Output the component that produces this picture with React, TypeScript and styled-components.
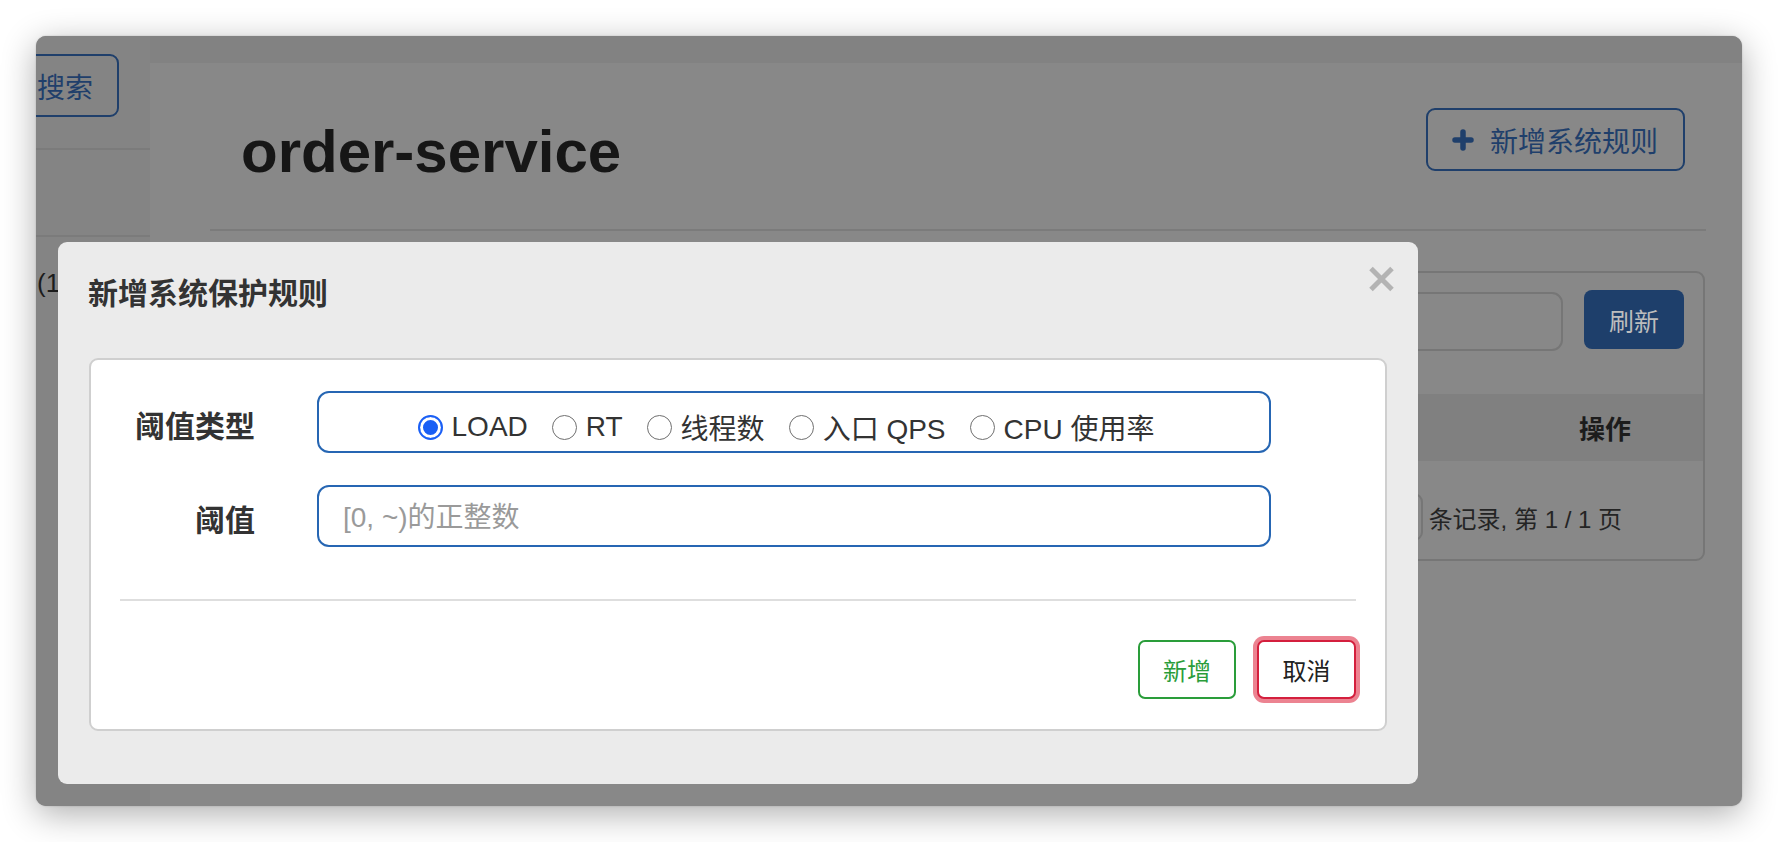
import styled, { createGlobalStyle } from 'styled-components';

const FONT = `"Liberation Sans", "Noto Sans CJK SC", sans-serif`;

const GlobalStyle = createGlobalStyle`
    html, body {
        margin: 0;
        padding: 0;
        background: #ffffff;
        font-family: ${FONT};
    }
    * {
        box-sizing: border-box;
    }
`

const Screen = styled.div`
    width: 1778px;
    height: 842px;
    padding: 36px;
`

const Window = styled.div`
    position: relative;
    display: flex;
    width: 1706px;
    height: 770px;
    border-radius: 10px;
    overflow: hidden;
    background-color: #888888;
    box-shadow: 0 8px 34px rgba(0, 0, 0, 0.32), 0 0 2px rgba(0, 0, 0, 0.2);
`

/* ---------- dimmed page behind the modal ---------- */

const Sidebar = styled.div`
    width: 114px;
    flex-shrink: 0;
    background-color: #848484;
    padding-top: 18px;
`

const SearchButton = styled.div`
    display: flex;
    align-items: center;
    justify-content: flex-end;
    margin-left: -60px;
    width: 143px;
    height: 63px;
    padding-right: 24px;
    border: 2px solid #1f3f6b;
    border-radius: 9px;
    color: #1f3f6b;
    font-size: 28px;
`

const SideLine = styled.div<{ $gap: number }>`
    height: 2px;
    margin-top: ${p => p.$gap}px;
    background-color: #7b7b7b;
`

const SideText = styled.div`
    margin-top: 31px;
    padding-left: 1px;
    font-size: 26px;
    line-height: 30px;
    color: #1c1c1c;
    white-space: nowrap;
`

const Main = styled.div`
    flex: 1;
    display: flex;
    flex-direction: column;
`

const TopBand = styled.div`
    height: 27px;
    background-color: #828282;
`

const Header = styled.div`
    display: flex;
    justify-content: space-between;
    align-items: flex-start;
    height: 166px;
    padding: 0 57px 0 91px;
`

const PageTitle = styled.h1`
    margin: 59px 0 0;
    font-size: 60px;
    line-height: 60px;
    font-weight: 700;
    color: #161616;
`

const OutlineButton = styled.div`
    display: flex;
    align-items: center;
    gap: 16px;
    margin-top: 45px;
    height: 63px;
    padding: 0 25px 0 24px;
    border: 2px solid #1f3f6b;
    border-radius: 9px;
    color: #1f3f6b;
    font-size: 28px;
`

const Rule = styled.div`
    height: 2px;
    margin: 0 36px 0 60px;
    background-color: #7b7b7b;
`

const Panel = styled.div`
    height: 290px;
    margin: 40px 37px 0 60px;
    border: 2px solid #767676;
    border-radius: 9px;
    display: flex;
    flex-direction: column;
`

const Toolbar = styled.div`
    display: flex;
    justify-content: flex-end;
    gap: 21px;
    padding: 17px 19px 0 0;
`

const SearchInput = styled.div`
    width: 640px;
    height: 59px;
    margin-top: 2px;
    border: 2px solid #767676;
    border-radius: 11px;
`

const RefreshButton = styled.div`
    display: flex;
    align-items: center;
    justify-content: center;
    width: 100px;
    height: 59px;
    border-radius: 8px;
    background-color: #1e3f6b;
    color: #bdbdbd;
    font-size: 25px;
`

const TableHead = styled.div`
    display: flex;
    align-items: center;
    justify-content: flex-end;
    height: 67px;
    margin-top: 43px;
    padding-right: 72px;
    background-color: #808080;
    color: #1c1c1c;
    font-size: 26px;
    font-weight: 700;
`

const Pager = styled.div`
    display: flex;
    align-items: center;
    justify-content: flex-end;
    gap: 6px;
    height: 60px;
    margin-top: 26px;
    padding-right: 81px;
    color: #242424;
    font-size: 24px;
`

const PageSize = styled.div`
    width: 70px;
    height: 48px;
    border: 2px solid #767676;
    border-radius: 9px;
`

/* ---------- modal ---------- */

const Modal = styled.div`
    position: absolute;
    left: 22px;
    top: 206px;
    width: 1360px;
    height: 542px;
    display: flex;
    flex-direction: column;
    border-radius: 9px;
    background-color: #ebebeb;
`

const ModalHeader = styled.div`
    display: flex;
    justify-content: space-between;
    align-items: flex-start;
    height: 116px;
    padding: 23px 23px 0 30px;
`

const ModalTitle = styled.div`
    margin-top: 9px;
    font-size: 30px;
    line-height: 40px;
    font-weight: 700;
    color: #333333;
`

const ModalBody = styled.div`
    padding: 0 31px;
`

const FormCard = styled.div`
    height: 373px;
    padding: 31px 29px 0;
    border: 2px solid #cfcfcf;
    border-radius: 9px;
    background-color: #ffffff;
`

const FormGrid = styled.div`
    display: grid;
    grid-template-columns: 135px 954px;
    grid-auto-rows: 62px;
    column-gap: 62px;
    row-gap: 32px;
`

const Label = styled.div`
    display: flex;
    align-items: center;
    justify-content: flex-end;
    padding-top: 4px;
    font-size: 30px;
    font-weight: 700;
    color: #333333;
`

const RadioBox = styled.div`
    display: flex;
    align-items: center;
    justify-content: center;
    gap: 24px;
    padding: 10px 16px 0 0;
    border: 2px solid #2666b3;
    border-radius: 12px;
`

const RadioItem = styled.label`
    display: flex;
    align-items: center;
    gap: 9px;
    font-size: 28px;
    color: #333333;
    white-space: nowrap;
`

const RadioDot = styled.span<{ $checked?: boolean }>`
    width: 25px;
    height: 25px;
    border-radius: 50%;
    flex-shrink: 0;
    background-color: #ffffff;
    border: ${p => (p.$checked ? '2.5px solid #1a5ff5' : '1.5px solid #6f6f6f')};
    box-shadow: ${p => (p.$checked ? 'inset 0 0 0 3px #ffffff, inset 0 0 0 12px #1a5ff5' : 'none')};
`

const TextInput = styled.input`
    width: 100%;
    height: 62px;
    padding: 4px 24px 0;
    border: 2px solid #2666b3;
    border-radius: 12px;
    outline: none;
    font-family: ${FONT};
    font-size: 28px;
    color: #333333;

    &::placeholder {
        color: #9a9a9a;
    }
`

const Divider = styled.div`
    height: 2px;
    margin-top: 52px;
    background-color: #dedede;
`

const Footer = styled.div`
    display: flex;
    justify-content: flex-end;
    gap: 21px;
    margin-top: 39px;
`

const ActionButton = styled.div<{ $tone: 'success' | 'danger' }>`
    display: flex;
    align-items: center;
    justify-content: center;
    width: ${p => (p.$tone === 'success' ? 98 : 99)}px;
    height: 59px;
    border-radius: 7px;
    background-color: #ffffff;
    font-size: 24px;
    border: 2px solid ${p => (p.$tone === 'success' ? '#2a9d3a' : '#d41f3d')};
    color: ${p => (p.$tone === 'success' ? '#2a9d3a' : '#222222')};
    box-shadow: ${p => (p.$tone === 'danger' ? '0 0 0 4px #ec8391' : 'none')};
`

const PlusIcon = () => (
    <svg width="22" height="22" viewBox="0 0 22 22">
        <path d="M11 3v16M3 11h16" stroke="#1f3f6b" strokeWidth="5.5" strokeLinecap="round" />
    </svg>
)

const CloseIcon = () => (
    <svg width="27" height="28" viewBox="0 0 27 28">
        <path d="M3 3.5l21 21M24 3.5l-21 21" stroke="#b3b3b3" strokeWidth="5" />
    </svg>
)

const radioOptions = ['LOAD', 'RT', '线程数', '入口 QPS', 'CPU 使用率'];

const App = () => {
    return (
        <Screen>
            <GlobalStyle />
            <Window>
                <Sidebar>
                    <SearchButton>搜索</SearchButton>
                    <SideLine $gap={31} />
                    <SideLine $gap={85} />
                    <SideText>(1)</SideText>
                </Sidebar>
                <Main>
                    <TopBand />
                    <Header>
                        <PageTitle>order-service</PageTitle>
                        <OutlineButton><PlusIcon />新增系统规则</OutlineButton>
                    </Header>
                    <Rule />
                    <Panel>
                        <Toolbar>
                            <SearchInput />
                            <RefreshButton>刷新</RefreshButton>
                        </Toolbar>
                        <TableHead>操作</TableHead>
                        <Pager>
                            <PageSize />
                            条记录, 第 1 / 1 页
                        </Pager>
                    </Panel>
                </Main>

                <Modal>
                    <ModalHeader>
                        <ModalTitle>新增系统保护规则</ModalTitle>
                        <CloseIcon />
                    </ModalHeader>
                    <ModalBody>
                        <FormCard>
                            <FormGrid>
                                <Label>阈值类型</Label>
                                <RadioBox>
                                    {radioOptions.map((o, i) => (
                                        <RadioItem key={o}>
                                            <RadioDot $checked={i === 0} />
                                            {o}
                                        </RadioItem>
                                    ))}
                                </RadioBox>
                                <Label>阈值</Label>
                                <TextInput placeholder="[0, ~)的正整数" />
                            </FormGrid>
                            <Divider />
                            <Footer>
                                <ActionButton $tone="success">新增</ActionButton>
                                <ActionButton $tone="danger">取消</ActionButton>
                            </Footer>
                        </FormCard>
                    </ModalBody>
                </Modal>
            </Window>
        </Screen>
    );
}

export default App;
